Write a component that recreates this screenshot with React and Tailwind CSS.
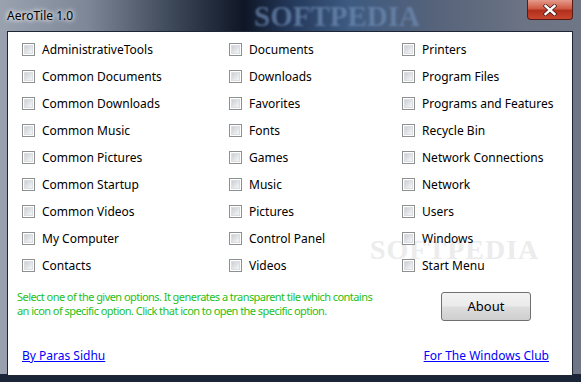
import React from "react";

const col1 = ["AdministrativeTools","Common Documents","Common Downloads","Common Music","Common Pictures","Common Startup","Common Videos","My Computer","Contacts"];
const col2 = ["Documents","Downloads","Favorites","Fonts","Games","Music","Pictures","Control Panel","Videos"];
const col3 = ["Printers","Program Files","Programs and Features","Recycle Bin","Network Connections","Network","Users","Windows","Start Menu"];

function Check({ label }) {
  return (
    <div className="flex h-[27px] items-center gap-[7px]">
      <span className="box-border flex h-[13px] w-[13px] shrink-0 items-center justify-center border border-[#8e8f8f] bg-white">
        <span className="h-[9px] w-[9px] bg-gradient-to-br from-[#cbcfd5] to-[#f6f6f6] border border-[#dadde2]" />
      </span>
      <span className="whitespace-nowrap text-[12px] text-black">{label}</span>
    </div>
  );
}

export default function App() {
  const rows = [];
  for (let i = 0; i < 9; i++) {
    rows.push(<Check key={"a" + i} label={col1[i]} />);
    rows.push(<Check key={"b" + i} label={col2[i]} />);
    rows.push(<Check key={"c" + i} label={col3[i]} />);
  }
  return (
    <div
      className="relative h-[382px] w-[581px] overflow-hidden bg-[linear-gradient(90deg,#9aa2b0_0%,#7d8797_15%,#3b4657_30%,#0f1626_42%,#24385a_50%,#3d5a80_60%,#56637a_75%,#6b7384_90%,#6f7787_100%)] pt-[31px] pl-[7px] pr-[8px] pb-[6px]"
      style={{ fontFamily: '"Segoe UI", "Noto Sans", "Liberation Sans", sans-serif' }}
    >
      {/* title bar */}
      <div className="absolute left-0 top-0 flex h-[31px] w-full items-center pl-[7px]">
        <span className="text-[12px] text-black [text-shadow:0_0_6px_#fff,0_0_4px_#fff]">AeroTile 1.0</span>
      </div>
      <div className="absolute left-[254px] top-[-5px] text-[29px] font-bold tracking-[0px] text-[#6f8cb4] opacity-70 blur-[1.2px]" style={{ fontFamily: '"Liberation Serif", serif' }}>
        SOFTPEDIA
      </div>
      {/* close */}
      <div className="absolute right-[8px] top-0 flex h-[20px] w-[46px] items-center justify-center rounded-b-[4px] border border-t-0 border-[#5a1a14] bg-[linear-gradient(180deg,#e59a8a_0%,#cf5a44_45%,#b2301c_55%,#c8462e_100%)]">
        <svg width="14" height="12" viewBox="0 0 14 12">
          <path d="M2.5 2 L11.5 10 M11.5 2 L2.5 10" stroke="#3a1010" strokeWidth="3.8" strokeLinecap="square" />
          <path d="M2.5 2 L11.5 10 M11.5 2 L2.5 10" stroke="#ffffff" strokeWidth="2.4" strokeLinecap="square" />
        </svg>
      </div>
      {/* bottom frame darker */}
      <div className="absolute bottom-0 left-0 h-[8px] w-full bg-[#1b2538]" />
      {/* content */}
      <div className="relative box-border h-[345px] w-[566px] border border-[#1e2636] bg-white">
        <div className="pointer-events-none absolute left-[362px] top-[197px] text-[28px] font-bold tracking-[1px] text-[#ececec]" style={{ fontFamily: '"Liberation Serif", serif' }}>
          SOFTPEDIA
        </div>
        <div className="relative grid grid-cols-[207px_173px_1fr] pl-[14px] pt-[4px]">{rows}</div>
        <div className="flex items-start pl-[9px] pt-[11px]">
          <p className="w-[410px] whitespace-nowrap text-[11px] leading-[14px] tracking-[-0.55px] text-[#1fc01a]">
            Select one of the given options. It generates a transparent tile which contains
            <br />
            an icon of specific option. Click that icon to open the specific option.
          </p>
          <button className="ml-[14px] mt-[2px] box-border h-[29px] w-[90px] rounded-[3px] border border-[#707070] bg-[linear-gradient(180deg,#f2f2f2_0%,#ebebeb_48%,#dddddd_52%,#cfcfcf_100%)] text-[13px] text-black">
            About
          </button>
        </div>
        <div className="mt-[26px] flex justify-between pl-[14px] pr-[23px]">
          <span className="text-[12px] text-[#0000ff] underline">By Paras Sidhu</span>
          <span className="text-[12px] text-[#0000ff] underline">For The Windows Club</span>
        </div>
      </div>
    </div>
  );
}
